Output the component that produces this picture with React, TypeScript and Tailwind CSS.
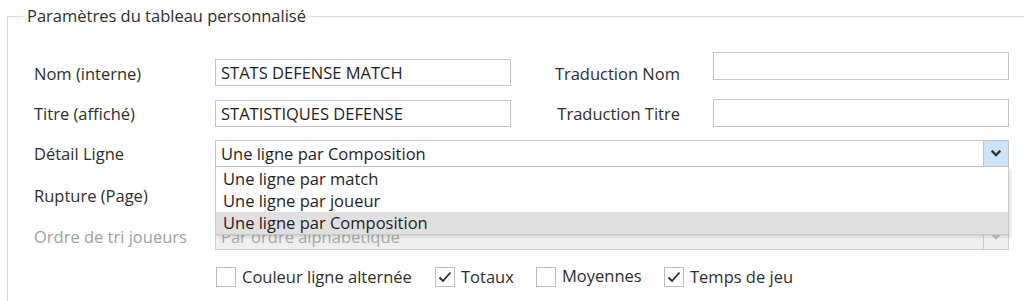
import React from "react";

function Chevron({ color }: { color: string }) {
  return (
    <svg width="10" height="7" viewBox="0 0 10 7" fill="none">
      <path d="M1.5 1.5 L5 5 L8.5 1.5" stroke={color} strokeWidth="2.4" strokeLinecap="square" />
    </svg>
  );
}

function Check() {
  return (
    <svg width="14" height="12" viewBox="0 0 14 12" fill="none">
      <path d="M1.5 6.5 L5 10 L12.5 1.5" stroke="#2b2b2b" strokeWidth="1.8" />
    </svg>
  );
}

function TextBox({ value, className }: { value?: string; className?: string }) {
  return (
    <div
      className={`h-[27px] w-[296px] border border-[#c4c4c4] bg-white pl-[5px] leading-[25px] text-[#1e1e1e] ${className ?? ""}`}
    >
      {value}
    </div>
  );
}

function Checkbox({ label, checked, width, lift }: { label: string; checked?: boolean; width: string; lift?: boolean }) {
  return (
    <div className={`flex items-center ${width}`}>
      <div className="flex h-[20px] w-[20px] items-center justify-center border border-[#bdbdbd] bg-white">
        {checked && <Check />}
      </div>
      <span className={`ml-[6px] whitespace-nowrap leading-[20px] text-[#2e2e2e] ${lift ? "-mt-[3px]" : ""}`}>{label}</span>
    </div>
  );
}

export default function App() {
  return (
    <div className="h-[301px] w-[1024px] overflow-hidden bg-white font-['Open_Sans',sans-serif] text-[16.5px] text-[#2e2e2e]">
      <fieldset className="ml-[7px] mt-[6px] w-[1100px] border border-[#dcdcdc] pb-10">
        <legend className="ml-[16px] px-[3px] leading-[20px]">Paramètres du tableau personnalisé</legend>

        <div className="mt-[26px] pl-[26px]">
          {/* rangée 1 */}
          <div className="flex items-start">
            <div className="mt-[12px] w-[181px] leading-[20px]">Nom (interne)</div>
            <TextBox value="STATS DEFENSE MATCH" className="mt-[7px]" />
            <div className="mt-[12px] w-[169px] text-right leading-[20px]">Traduction Nom</div>
            <TextBox className="ml-[33px] h-[28px]" />
          </div>

          {/* rangée 2 */}
          <div className="mt-[13px] flex items-start">
            <div className="mt-[5px] w-[181px] leading-[20px]">Titre (affiché)</div>
            <TextBox value="STATISTIQUES DEFENSE" className="mt-[1px]" />
            <div className="mt-[5px] w-[169px] text-right leading-[20px]">Traduction Titre</div>
            <TextBox className="ml-[33px] h-[28px]" />
          </div>

          {/* Détail ligne */}
          <div className="mt-[13px] flex items-start">
            <div className="mt-[4px] w-[181px] leading-[20px]">Détail Ligne</div>
            <div className="relative z-10 w-[794px]">
              <div className="flex h-[27px] border border-[#c4c4c4] bg-white">
                <div className="flex-1 pl-[5px] leading-[25px] text-[#1e1e1e]">Une ligne par Composition</div>
                <div className="flex w-[25px] items-center justify-center border-l border-[#c4c4c4] bg-[#cce4f7]">
                  <Chevron color="#333" />
                </div>
              </div>
              <div className="absolute left-0 top-full w-full border-x border-b border-[#c8c8c8] bg-white pt-[1px] text-[#1e1e1e] shadow-[2px_2px_3px_rgba(0,0,0,0.12)]">
                <div className="h-[22px] pl-[7px] leading-[22px]">Une ligne par match</div>
                <div className="h-[22px] pl-[7px] leading-[22px]">Une ligne par joueur</div>
                <div className="h-[22px] bg-[#e0e0e0] pl-[7px] leading-[22px]">Une ligne par Composition</div>
              </div>
            </div>
          </div>

          {/* Rupture */}
          <div className="mt-[14px] flex items-start">
            <div className="mt-[5px] w-[181px] leading-[20px]">Rupture (Page)</div>
            <div className="flex h-[27px] w-[794px] border border-[#c4c4c4] bg-white">
              <div className="flex-1" />
              <div className="flex w-[25px] items-center justify-center border-l border-[#c4c4c4]">
                <Chevron color="#333" />
              </div>
            </div>
          </div>

          {/* Ordre de tri */}
          <div className="mt-[15px] flex items-start">
            <div className="mt-[4px] w-[181px] leading-[20px] text-[#a0a0a0]">Ordre de tri joueurs</div>
            <div className="flex h-[27px] w-[794px] border border-[#cdcdcd] bg-[#efefef]">
              <div className="flex-1 pl-[5px] leading-[25px] text-[#a8a8a8]">Par ordre alphabétique</div>
              <div className="flex w-[25px] items-center justify-center border-l border-[#cdcdcd]">
                <Chevron color="#bdbdbd" />
              </div>
            </div>
          </div>

          {/* Cases à cocher */}
          <div className="mt-[17px] flex items-center pl-[182px]">
            <Checkbox label="Couleur ligne alternée" width="w-[219px]" />
            <Checkbox label="Totaux" checked width="w-[101px]" />
            <Checkbox label="Moyennes" width="w-[128px]" lift />
            <Checkbox label="Temps de jeu" checked width="w-[160px]" />
          </div>
        </div>
      </fieldset>
    </div>
  );
}
